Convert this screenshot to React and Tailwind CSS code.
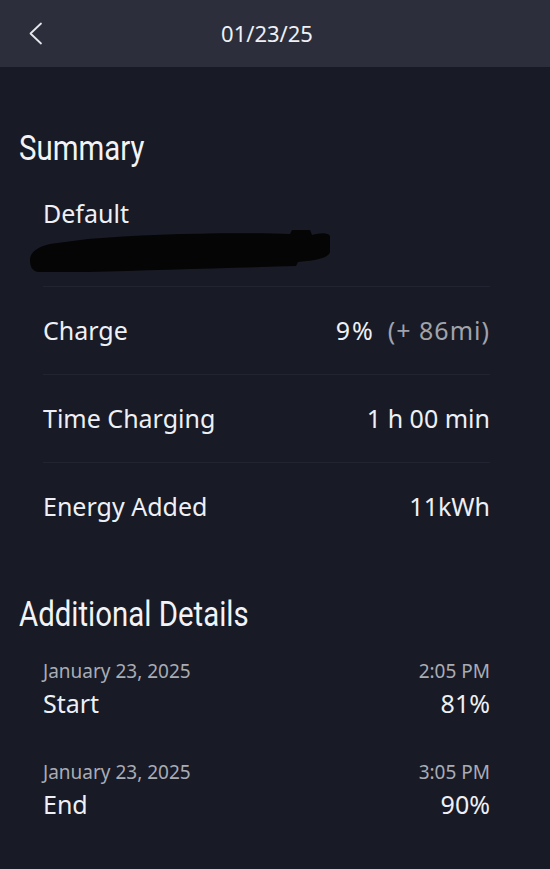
import React from "react";

const body = "font-['Noto_Sans','Open_Sans',sans-serif]";
const cond = "font-['Roboto','Noto_Sans',sans-serif]";

function Row({ label, children }) {
  return (
    <div className="flex h-[88px] items-center justify-between border-t border-[#222531]">
      <span className="text-[25px] leading-none text-[#eef0f5]">{label}</span>
      <span className="text-[25px] leading-none text-[#eef0f5]">{children}</span>
    </div>
  );
}

function Detail({ date, time, label, value }) {
  return (
    <div className="flex flex-col">
      <div className="flex items-center justify-between text-[19px] leading-[22px] text-[#a9acb5]">
        <span>{date}</span>
        <span>{time}</span>
      </div>
      <div className="mt-[6px] flex items-center justify-between text-[25px] leading-[30px] text-[#eef0f5]">
        <span>{label}</span>
        <span>{value}</span>
      </div>
    </div>
  );
}

export default function App() {
  return (
    <div className={`min-h-[869px] w-full bg-[#181a25] ${body}`}>
      <header className="flex h-[67px] items-center bg-[#2c2e3b]">
        <svg className="ml-[28px] h-[23px] w-[15px]" viewBox="0 0 15 23" fill="none">
          <path d="M13 1.5 L2.5 11.5 L13 21.5" stroke="#e6e7ec" strokeWidth="1.8" strokeLinecap="round" strokeLinejoin="round" />
        </svg>
        <div className="mr-[59px] flex-1 pb-[2px] text-center text-[22px] leading-none text-[#eef0f5]">01/23/25</div>
      </header>

      <main className="px-[19px] pb-[40px]">
        <h2 className={`mt-[62px] origin-left scale-x-[0.84] whitespace-nowrap text-[35px] leading-[40px] text-[#f2f3f7] ${cond}`}>Summary</h2>

        <div className="ml-[24px] mr-[41px]">
          <div className="pt-[29px] text-[25px] leading-[30px] text-[#eef0f5]">Default</div>
          <svg className="-ml-[15px] mt-[2px] block h-[42px] w-[304px]" viewBox="0 0 304 42">
            <path
              d="M2 30 C2 22 10 17 22 14 L60 9 C120 4 200 2 262 4 L264 0 L282 0 L284 5 C292 3 300 2 302 6 L302 22 C300 28 290 30 270 32 L268 36 C200 38 120 40 60 42 L10 42 C4 41 2 36 2 30 Z"
              fill="#050506"
            />
          </svg>
          <div className="mt-[14px]">
            <Row label="Charge">
              <span className="tracking-[2px]">9%</span>
              <span className="ml-[13px] tracking-[1px] text-[#a0a3ad]">(+ 86mi)</span>
            </Row>
            <Row label="Time Charging">1 h 00 min</Row>
            <Row label="Energy Added">11kWh</Row>
          </div>
        </div>

        <h2 className={`mt-[45px] origin-left scale-x-[0.84] whitespace-nowrap text-[35px] leading-[40px] text-[#f2f3f7] ${cond}`}>Additional Details</h2>

        <div className="ml-[24px] mr-[41px] mt-[25px] flex flex-col gap-[43px]">
          <Detail date="January 23, 2025" time="2:05 PM" label="Start" value="81%" />
          <Detail date="January 23, 2025" time="3:05 PM" label="End" value="90%" />
        </div>
      </main>
    </div>
  );
}
